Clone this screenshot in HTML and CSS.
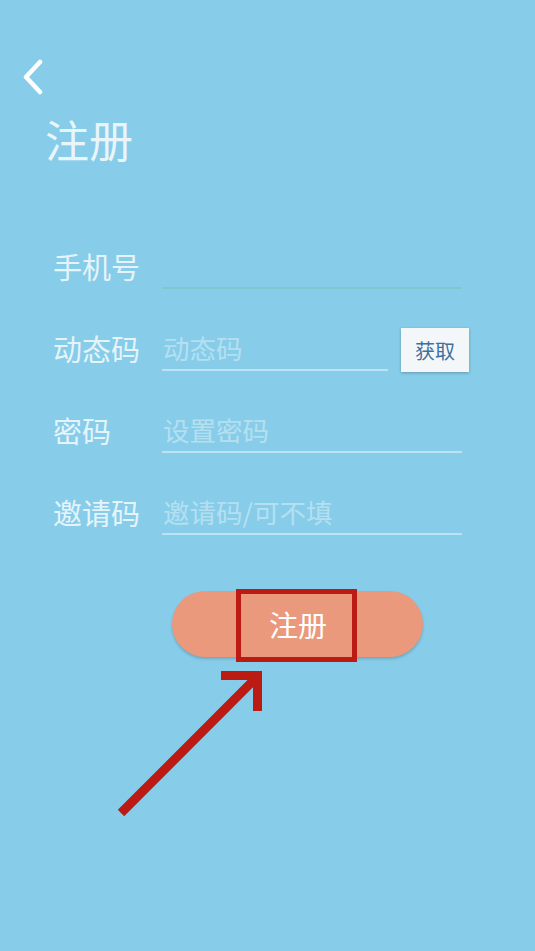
FILE: index.html
```html
<!DOCTYPE html>
<html lang="zh-CN">
<head>
<meta charset="utf-8">
<title>注册</title>
<link rel="stylesheet" href="styles.css">
</head>
<body>
<div class="screen">
  <header class="top">
    <button class="back" aria-label="返回">
      <svg width="24" height="36" viewBox="0 0 24 36"><polyline points="19,3 5,18 19,33" fill="none" stroke="#fff" stroke-width="4.5" stroke-linecap="round" stroke-linejoin="round"/></svg>
    </button>
    <h1 class="title">注册</h1>
  </header>

  <form class="form">
    <div class="row">
      <label class="label">手机号</label>
      <div class="field focused"><span class="value"></span></div>
    </div>
    <div class="row">
      <label class="label">动态码</label>
      <div class="field short"><span class="ph">动态码</span></div>
      <button type="button" class="get">获取</button>
    </div>
    <div class="row">
      <label class="label">密码</label>
      <div class="field"><span class="ph">设置密码</span></div>
    </div>
    <div class="row">
      <label class="label">邀请码</label>
      <div class="field"><span class="ph">邀请码/可不填</span></div>
    </div>
  </form>

  <div class="actions">
    <button type="button" class="submit">注册</button>
  </div>

  <div class="mark-box"></div>
  <svg class="mark-arrow" width="535" height="951" viewBox="0 0 535 951">
    <line x1="121" y1="813" x2="255" y2="679" stroke="#bb1b12" stroke-width="9"/>
    <polyline points="221,675.5 257.5,675.5 257.5,711" fill="none" stroke="#bb1b12" stroke-width="9" stroke-linejoin="miter"/>
  </svg>
</div>
</body>
</html>
```

FILE: styles.css
```css
* { box-sizing: border-box; }
html, body { margin: 0; padding: 0; }
body {
  background: #87cde9;
  font-family: "Noto Sans CJK SC", "Noto Sans", sans-serif;
}
.screen {
  position: relative;
  width: 535px;
  height: 951px;
  overflow: hidden;
}
.top {
  padding: 59px 0 0 21px;
}
.back {
  display: block;
  background: none;
  border: 0;
  padding: 0;
  width: 24px;
  height: 36px;
}
.back svg { display: block; }
.title {
  margin: 14px 0 0 24px;
  font-size: 44px;
  font-weight: 400;
  line-height: 60px;
  color: rgba(255,255,255,0.82);
}
.form {
  margin-top: 78px;
  padding-left: 53px;
  display: flex;
  flex-direction: column;
  gap: 40px;
}
.row {
  display: flex;
  align-items: center;
  height: 42px;
}
.label {
  width: 109px;
  font-size: 29px;
  line-height: 40px;
  color: rgba(255,255,255,0.8);
  margin-top: -5px;
}
.field {
  width: 300px;
  height: 42px;
  border-bottom: 2px solid rgba(255,255,255,0.45);
  display: flex;
  align-items: center;
  padding: 0 0 3px 1px;
}
.field.focused { border-bottom-color: #7cc9cf; }
.field.short { width: 226px; }
.ph {
  font-size: 26.5px;
  line-height: 40px;
  color: rgba(255,255,255,0.4);
}
.get {
  margin-left: 13px;
  width: 68px;
  height: 44px;
  border: 0;
  background: #f4f7f9;
  box-shadow: 0 1px 3px rgba(0,0,0,0.25);
  font-family: inherit;
  font-size: 20px;
  color: #3f6f9f;
  padding: 0;
  align-self: flex-start;
  margin-top: -1px;
}
.actions {
  margin-top: 56px;
  padding-left: 172px;
}
.submit {
  display: block;
  width: 251px;
  height: 66px;
  border: 0;
  border-radius: 33px;
  background: #ea997c;
  box-shadow: 0 2px 3px rgba(0,0,0,0.18);
  font-family: inherit;
  font-size: 29px;
  color: #fff;
  padding: 0;
  text-indent: 1px;
}
.mark-box {
  position: absolute;
  left: 236px;
  top: 589px;
  width: 121px;
  height: 73px;
  border: 5px solid #bb1b12;
}
.mark-arrow {
  position: absolute;
  left: 0;
  top: 0;
  pointer-events: none;
}
```
